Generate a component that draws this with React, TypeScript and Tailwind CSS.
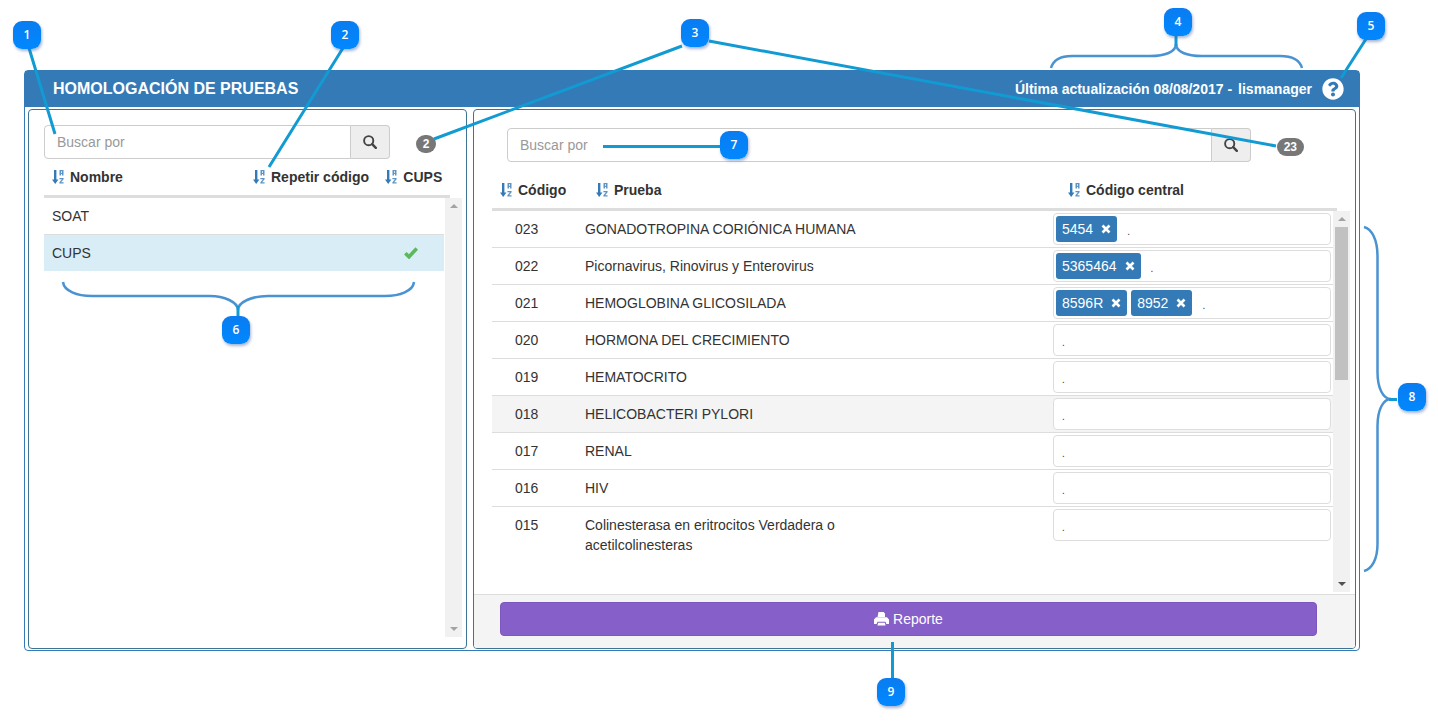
import type { ReactNode } from "react";
import { FaQuestionCircle } from "react-icons/fa";

const tests = [
  { code: "023", name: "GONADOTROPINA CORIÓNICA HUMANA", central: ["5454"] },
  { code: "022", name: "Picornavirus, Rinovirus y Enterovirus", central: ["5365464"] },
  { code: "021", name: "HEMOGLOBINA GLICOSILADA", central: ["8596R", "8952"] },
  { code: "020", name: "HORMONA DEL CRECIMIENTO", central: [] },
  { code: "019", name: "HEMATOCRITO", central: [] },
  { code: "018", name: "HELICOBACTERI PYLORI", central: [], active: true },
  { code: "017", name: "RENAL", central: [] },
  { code: "016", name: "HIV", central: [] },
  { code: "015", name: "Colinesterasa en eritrocitos Verdadera o acetilcolinesteras", central: [] },
];

function SortIcon() {
  return (
    <svg viewBox="0 0 14 16" className="h-4 w-3.5 shrink-0 fill-[#337ab7]" aria-hidden="true">
      <path d="M2 1h2.4v9.500h2L3.200 15 0 10.500h2z" />
      <path d="M7.500 1h4v5.500H10V5H9v1.500H7.500zM9 2.200v1.500h1V2.200z" fillRule="evenodd" opacity=".8" />
      <path d="M7.400 9h4.200v1.300l-2.500 3h2.500v1.300H7.400v-1.300l2.500-3H7.400z" opacity=".8" />
    </svg>
  );
}

function SearchIcon() {
  return (
    <svg viewBox="0 0 14 14" className="h-3.5 w-3.5" fill="none" stroke="#444" aria-hidden="true">
      <circle cx="5.700" cy="5.700" r="4.600" strokeWidth="1.900" />
      <path d="M9.200 9.200l3.600 3.600" strokeWidth="2.400" strokeLinecap="round" />
    </svg>
  );
}

function CheckIcon() {
  return (
    <svg viewBox="0 0 14 12" className="mx-auto h-3 w-3.5" fill="none" stroke="#5cb85c" strokeWidth="3.600" role="img" aria-label="Sí">
      <path d="M1.300 6.200L5 9.800L12.800 1.500" />
    </svg>
  );
}

function PrintIcon() {
  return (
    <svg viewBox="0 0 15 14" className="h-3.5 w-[15px] fill-white" aria-hidden="true">
      <path d="M4.500 0h5l1.500 1.500V5H3.500zM2 5.200h11l2 2.300V12h-2.600l-.9-2.200h-8L2.600 12H0V7.500zM4.200 10.800h6.600l.8 2.700H3.400z" />
    </svg>
  );
}

function Search({ id }: { id: string }) {
  return (
    <form role="search" className="flex h-[34px] flex-1" onSubmit={(e) => e.preventDefault()}>
      <input
        id={id}
        aria-label="Buscar por"
        placeholder="Buscar por"
        className="min-w-0 flex-1 rounded-l border border-[#ccc] bg-white px-3 text-sm text-[#555] placeholder:text-[#999] focus:outline-none"
      />
      <button
        type="submit"
        aria-label="Buscar"
        className="flex w-[39px] items-center justify-center rounded-r border border-l-0 border-[#ccc] bg-[#eee]"
      >
        <SearchIcon />
      </button>
    </form>
  );
}

function Count({ children }: { children: ReactNode }) {
  return (
    <span className="flex h-[18px] items-center rounded-full bg-[#777] px-[7px] text-xs font-bold text-white">
      {children}
    </span>
  );
}

function Heading({ className, children }: { className: string; children: ReactNode }) {
  return (
    <th scope="col" className={`border-b-3 border-[#ddd] pb-2 text-left font-bold whitespace-nowrap ${className}`}>
      <button type="button" className="flex h-5 items-center gap-1 font-bold">
        <SortIcon />
        {children}
      </button>
    </th>
  );
}

function ScrollBar({ active = false, headClass }: { active?: boolean; headClass: string }) {
  return (
    <div className="flex shrink-0 flex-col" aria-hidden="true">
      <div className={`shrink-0 border-b-3 border-[#ddd] ${headClass}`} />
      <div className={`flex w-[17px] flex-1 flex-col items-center bg-[#f1f1f1] pb-1.5 ${active ? "" : "ml-px"}`}>
        <div className="flex h-4 shrink-0 items-center">
          <svg viewBox="0 0 8 4" className="h-1 w-2 fill-[#a3a3a3]">
            <path d="M4 0l4 4H0z" />
          </svg>
        </div>
        {active && <div className="h-[153px] w-[13px] bg-[#c1c1c1]" />}
        <svg viewBox="0 0 8 4" className={`mt-auto h-1 w-2 ${active ? "fill-[#505050]" : "fill-[#a3a3a3]"}`}>
          <path d="M4 4L0 0h8z" />
        </svg>
      </div>
    </div>
  );
}

function TagField({ code, tags }: { code: string; tags: string[] }) {
  return (
    <div className="flex h-8 items-center gap-1 rounded border border-[#ddd] bg-white pl-0.5">
      {tags.map((tag) => (
        <span key={tag} className="flex h-[26px] items-center gap-2 rounded-[3px] bg-[#337ab7] px-1.5 text-white">
          {tag}
          <button type="button" aria-label={`Quitar ${tag}`}>
            <svg viewBox="0 0 10 10" className="h-2.5 w-2.5" stroke="white" strokeWidth="2.600" aria-hidden="true">
              <path d="M1.500 1.500l7 7M8.500 1.500l-7 7" />
            </svg>
          </button>
        </span>
      ))}
      <input
        aria-label={`Código central de ${code}`}
        placeholder="."
        className="h-full min-w-0 flex-1 bg-transparent px-1.5 pt-1 text-[10px] placeholder:text-[#333] focus:outline-none"
      />
    </div>
  );
}

function HomologationList() {
  return (
    <section className="flex flex-col rounded border border-[#3d7493] bg-white pt-[15px] pr-1 pb-[11px] pl-[15px]">
      <div className="flex items-center">
        <Search id="list-search" />
        <div className="flex w-[72px] justify-center pt-1">
          <Count>2</Count>
        </div>
      </div>
      <div className="flex flex-1">
        <div className="flex-1">
          <table className="w-full table-fixed border-separate border-spacing-0">
            <thead>
              <tr>
                <Heading className="w-1/2 pt-2 pl-2">Nombre</Heading>
                <Heading className="w-1/3 pt-2 pl-[9px]">Repetir código</Heading>
                <Heading className="w-1/6 pt-2 pl-2">CUPS</Heading>
              </tr>
            </thead>
            <tbody>
              <tr className="h-[37px]">
                <td className="border-b border-[#ddd] px-2">SOAT</td>
                <td className="border-b border-[#ddd]" />
                <td className="border-b border-[#ddd]" />
              </tr>
              <tr className="h-9 bg-[#d9edf7]">
                <td className="px-2">CUPS</td>
                <td />
                <td>
                  <CheckIcon />
                </td>
              </tr>
            </tbody>
          </table>
        </div>
        <ScrollBar headClass="h-[39px] w-1.5" />
      </div>
    </section>
  );
}

function TestList() {
  return (
    <section className="flex flex-col overflow-hidden rounded border border-[#3d7493] bg-white">
      <div className="flex items-center pt-[18px] pr-[51px] pl-[33px]">
        <Search id="test-search" />
        <div className="ml-[26px] pt-1">
          <Count>23</Count>
        </div>
      </div>
      <div className="flex min-h-[432px] flex-1 pr-[5px] pb-0.5 pl-[18px]">
        <div className="flex-1">
          <table className="w-full table-fixed border-separate border-spacing-0">
            <thead>
              <tr>
                <Heading className="w-[85px] pt-[18px] pl-2">Código</Heading>
                <Heading className="pt-[18px] pl-[19px]">Prueba</Heading>
                <Heading className="w-[282px] pt-[18px] pl-[17px]">Código central</Heading>
              </tr>
            </thead>
            <tbody>
              {tests.map((test, i) => {
                const line = i < tests.length - 1 ? "border-b border-[#ddd]" : "";
                return (
                  <tr key={test.code} className={`h-[37px] align-top ${test.active ? "bg-[#f4f4f4]" : ""}`}>
                    <td className={`pt-2 pl-[23px] ${line}`}>{test.code}</td>
                    <td className={`pt-2 pl-2 ${line}`}>
                      <div className="max-w-xs">{test.name}</div>
                    </td>
                    <td className={`px-0.5 pt-0.5 pb-0.5 ${line}`}>
                      <TagField code={test.code} tags={test.central} />
                    </td>
                  </tr>
                );
              })}
            </tbody>
          </table>
        </div>
        <ScrollBar active headClass="h-[49px] w-1" />
      </div>
      <div className="border-t border-[#ddd] bg-[#f4f4f4] pt-[7px] pr-[38px] pb-3 pl-[26px]">
        <button
          type="button"
          className="flex h-[34px] w-full items-center justify-center gap-1 rounded border border-[#7d56be] bg-[#865fc9] text-white"
        >
          <PrintIcon />
          Reporte
        </button>
      </div>
    </section>
  );
}

function Marker({ n, className }: { n: number; className: string }) {
  return (
    <span
      className={`absolute flex h-7 w-7 items-center justify-center rounded-[9px] bg-linear-to-b from-[#0a7cf0] to-[#0088ff] font-['Open_Sans',sans-serif] text-xs font-semibold text-white shadow-[1px_2px_3px_rgba(60,90,160,0.45)] ${className}`}
    >
      {n}
    </span>
  );
}

function Callouts() {
  return (
    <div className="pointer-events-none absolute top-0 left-0">
      <svg width="1438" height="721" viewBox="0 0 1438 721" fill="none" strokeWidth="3" aria-hidden="true">
        <g stroke="#4a93d3" strokeWidth="2.500">
          <path d="M1051 68C1053 61 1060 56 1072 56H1150C1165 56 1176 52 1176 44C1176 52 1187 56 1202 56H1280C1293 56 1300 61 1302 68" />
          <path d="M63 282C64 291 77 296 92 296H210C224 296 238 302 238 310C238 302 252 296 268 296H385C400 296 413 291 414 282" />
          <path d="M1364 227C1372 229 1377.500 240 1377.500 256V372C1377.500 388 1383 399 1391 399C1383 399 1377.500 410 1377.500 426V544C1377.500 559 1372 569 1364 571" />
        </g>
        <g stroke="#129bd3">
          <path d="M29 48L55 134M343 48L269 167M682 46L434 139M709 41L1276 146M1176 36V46M1366 39L1341 78M238 306V316M603 146.500H721M1389 399.500H1397M892.500 642V679" />
        </g>
      </svg>
      <Marker n={1} className="top-[21px] left-[13px]" />
      <Marker n={2} className="top-[21px] left-[331px]" />
      <Marker n={3} className="top-[19px] left-[681px]" />
      <Marker n={4} className="top-[8px] left-[1164px]" />
      <Marker n={5} className="top-[12px] left-[1357px]" />
      <Marker n={6} className="top-[316px] left-[222px]" />
      <Marker n={7} className="top-[131px] left-[720px]" />
      <Marker n={8} className="top-[383px] left-[1398px]" />
      <Marker n={9} className="top-[678px] left-[877px]" />
    </div>
  );
}

export default function App() {
  return (
    <main className="relative min-h-screen bg-white pt-[70px] pr-[78px] pb-[70px] pl-6 font-['Liberation_Sans',Arial,sans-serif] text-sm text-[#333]">
      <div className="rounded border border-[#337ab7] bg-white">
        <header className="flex h-9 items-center bg-[#337ab7] pr-[15px] pl-7 font-bold text-white">
          <h1 className="text-base font-bold">HOMOLOGACIÓN DE PRUEBAS</h1>
          <p className="ml-auto">Última actualización 08/08/2017 -</p>
          <p className="ml-1.5">lismanager</p>
          <button type="button" aria-label="Ayuda" className="ml-2.5">
            <FaQuestionCircle className="h-[22px] w-[22px]" />
          </button>
        </header>
        <div className="grid grid-cols-[439fr_883fr] gap-1.5 px-[3px] pt-0.5 pb-px">
          <HomologationList />
          <TestList />
        </div>
      </div>
      <Callouts />
    </main>
  );
}
